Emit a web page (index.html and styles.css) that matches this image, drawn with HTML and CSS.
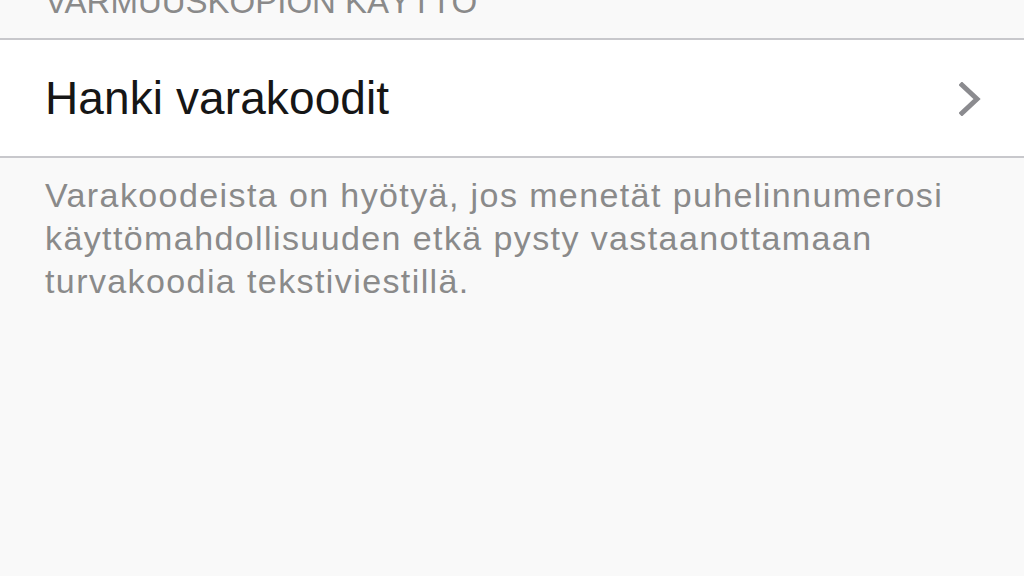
FILE: index.html
```html
<!DOCTYPE html>
<html lang="fi">
<head>
<meta charset="utf-8">
<link rel="stylesheet" href="styles.css">
</head>
<body>
<div class="page">
  <div class="section-header">VARMUUSKOPION KÄYTTÖ</div>
  <div class="group">
    <div class="row">
      <span class="row-label">Hanki varakoodit</span>
      <svg class="chevron" width="22" height="34" viewBox="0 0 22 34"><path d="M3 3 L18 17 L3 31" fill="none" stroke="#8b8b8f" stroke-width="5" stroke-linecap="square" stroke-linejoin="miter"/></svg>
    </div>
  </div>
  <p class="footer">Varakoodeista on hyötyä, jos menetät puhelinnumerosi käyttömahdollisuuden etkä pysty vastaanottamaan turvakoodia tekstiviestillä.</p>
</div>
</body>
</html>
```
FILE: styles.css
```css
html, body {
  margin: 0;
  padding: 0;
  background: #f9f9f9;
  width: 1024px;
  height: 576px;
  overflow: hidden;
  font-family: "Liberation Sans", Arial, sans-serif;
}
.page {
  display: flex;
  flex-direction: column;
}
.section-header {
  height: 38px;
  margin-top: -10px;
  padding-left: 45px;
  font-size: 33px;
  line-height: 24px;
  color: #8a8a8a;
  box-sizing: border-box;
}
.group {
  background: #fff;
  border-top: 2px solid #c8c8cc;
  border-bottom: 2px solid #c8c8cc;
  margin-top: 10px;
}
.row {
  height: 116px;
  display: flex;
  align-items: center;
  justify-content: space-between;
  padding: 0 43px 0 45px;
}
.row-label {
  font-size: 46px;
  letter-spacing: 0.1px;
  color: #161616;
}
.chevron {
  display: block;
  margin-top: 2px;
}
.footer {
  margin: 16px 0 0;
  padding: 0 40px 0 45px;
  font-size: 34px;
  line-height: 43px;
  letter-spacing: 1.4px;
  color: #8a8a8a;
}
```
